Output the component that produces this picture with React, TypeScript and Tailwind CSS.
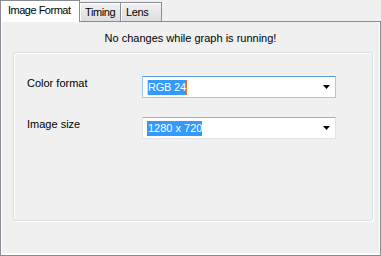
import React from 'react';

const font = { fontFamily: '"Liberation Sans", Arial, sans-serif' };

function Combo({ value, focused }: { value: string; focused?: boolean }) {
  return (
    <div
      className={
        focused
          ? 'flex items-center h-[22px] w-[194px] bg-white border border-[#a4c9e3] border-t-[#5b9bd1] pl-[4px] pr-[4px]'
          : 'flex items-center h-[22px] w-[194px] bg-white border border-[#e2e3ea] border-t-[#abadb3] pl-[4px] pr-[4px]'
      }
    >
      <span
        className={
          focused
            ? 'bg-[#3399ff] text-white leading-[13px] py-[1px] tracking-[-0.2px] border-l border-l-[#f5d7a8] border-r border-r-[#e07a1f]'
            : 'bg-[#3399ff] text-white leading-[13px] py-[1px] pl-px'
        }
      >
        {value}
      </span>
      <div className="flex-1" />
      <svg width="7" height="4" viewBox="0 0 7 4" className="mr-[1px]">
        <path d="M0 0H7L3.5 4Z" fill="#000" />
      </svg>
    </div>
  );
}

export default function App() {
  return (
    <div
      className="flex flex-col w-[381px] h-[256px] bg-[#f0f0f0] text-[11px] text-black"
      style={font}
    >
      {/* Tabs */}
      <div className="flex items-end h-[21px] shrink-0">
        <div className="relative z-10 self-start h-[22px] w-[80px] bg-white border border-b-0 border-[#898c95] pl-[7px] pt-[3px] leading-[13px] tracking-[-0.5px]">
          Image Format
        </div>
        <div className="h-[19px] w-[42px] -ml-px border border-b-0 border-[#898c95] bg-gradient-to-b from-[#f2f2f2] to-[#dcdcdc] shadow-[inset_1px_1px_0_#fff] pl-[5px] pt-[3px] leading-[13px] tracking-[-0.4px]">
          Timing
        </div>
        <div className="h-[19px] w-[42px] -ml-px border border-b-0 border-[#898c95] bg-gradient-to-b from-[#f2f2f2] to-[#dcdcdc] shadow-[inset_1px_1px_0_#fff] pl-[5px] pt-[3px] leading-[13px] tracking-[-0.4px]">
          Lens
        </div>
      </div>

      {/* Panel */}
      <div className="flex-1 flex flex-col border border-[#898c95] bg-[#f0f0f0] shadow-[inset_1px_0_0_#fff,inset_-1px_0_0_#fff,inset_0_-2px_0_#fff]">
        <div className="text-center leading-[13px] mt-[10px]">No changes while graph is running!</div>

        <div className="mt-[7px] ml-[12px] w-[360px] h-[169px] rounded-[3px] border border-[#d5dfe5] shadow-[inset_1px_1px_0_#fff,1px_1px_0_#fff] flex flex-col gap-[19px] pt-[23px] pl-[13px]">
          <div className="flex items-start">
            <div className="w-[115px] leading-[13px] pt-px">Color format</div>
            <Combo value="RGB 24" focused />
          </div>
          <div className="flex items-start">
            <div className="w-[115px] leading-[13px] pt-px">Image size</div>
            <Combo value="1280 x 720" />
          </div>
        </div>
      </div>
    </div>
  );
}
